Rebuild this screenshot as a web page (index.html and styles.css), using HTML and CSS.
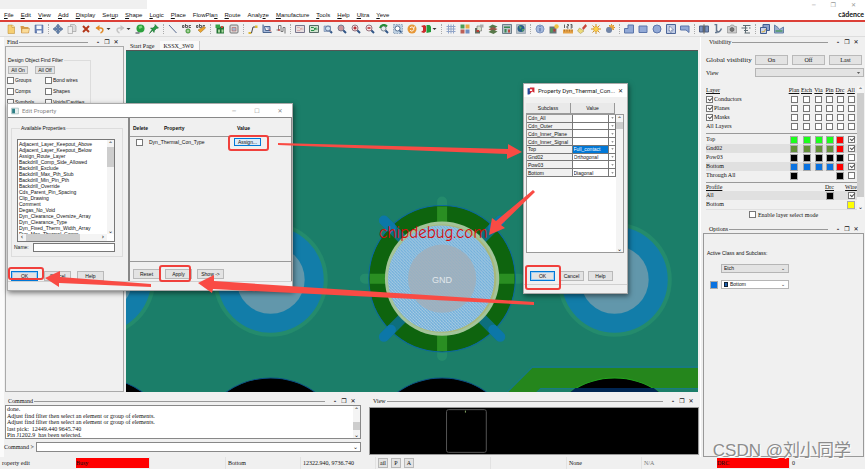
FILE: index.html
```html
<!DOCTYPE html>
<html lang="en">
<head>
<meta charset="utf-8">
<title>Edit Property</title>
<link rel="stylesheet" href="styles.css">
</head>
<body>
<svg class="defs" aria-hidden="true">
  <defs>
    <symbol id="new" viewBox="0 0 20 20"><path d="M4 2h9l4 4v13H4z" fill="#f6cf73" stroke="#b98427"/><path d="M12 2v5h5" fill="#fff3c8" stroke="#b98427"/></symbol>
    <symbol id="open" viewBox="0 0 20 20"><path d="M1 4h6l2 2h8v12H3z" fill="#d79b48"/><path d="M4 9h15l-2 9H3z" fill="#fbdc99" stroke="#bb7e2e"/></symbol>
    <symbol id="save" viewBox="0 0 20 20"><path d="M2 2h16v16H2z" fill="#7088bb" stroke="#465d91"/><path d="M5 3h10v7H5zM6 13h9v5H6z" fill="#f4f7fb"/></symbol>
    <symbol id="move" viewBox="0 0 20 20"><path d="M10 0l4 5h-2v3h3V6l5 4-5 4v-2h-3v3h2l-4 5-4-5h2v-3H5v2l-5-4 5-4v2h3V5H6z" fill="#6784ad" stroke="#405f87"/></symbol>
    <symbol id="copy" viewBox="0 0 20 20"><path d="M7 1h8l3 3v11H7z" fill="#ddd" stroke="#888"/><path d="M2 5h9v14H2z" fill="#eee" stroke="#888"/></symbol>
    <symbol id="del" viewBox="0 0 20 20"><path d="M4 4l12 12M16 4L4 16" stroke="#b43719" stroke-width="4"/></symbol>
    <symbol id="undo" viewBox="0 0 20 20"><path d="M3 8h8c7 0 6 8 0 10" fill="none" stroke="#df8b2c" stroke-width="3"/><path d="M1 8l8-6v12z" fill="#e48b26"/></symbol>
    <symbol id="redo" viewBox="0 0 20 20"><path d="M17 8H9c-7 0-6 8 0 10" fill="none" stroke="#c4c4c4" stroke-width="3"/><path d="M19 8l-8-6v12z" fill="#c4c4c4"/></symbol>
    <symbol id="drop" viewBox="0 0 10 20"><path d="M1 8h8l-4 4z" fill="#333"/></symbol>
    <symbol id="ball" viewBox="0 0 20 20"><circle cx="11" cy="9" r="8" fill="#2ba13d"/><path d="M1 17h8v2H1z" fill="#334"/><path d="M7 5l6-2 2 4-6 3z" fill="#7ad77d"/></symbol>
    <symbol id="pin" viewBox="0 0 20 20"><path d="M12 1l7 7-4 1-4 4-1 4-3-4-6 6 5-8-3-3 5 0 4-4z" fill="#2a9a45" stroke="#15652a"/></symbol>
    <symbol id="line" viewBox="0 0 20 20"><path d="M2 2l15 16" stroke="#586b91" stroke-width="2"/></symbol>
    <symbol id="abc" viewBox="0 0 20 20"><path d="M1 7V3h3v4H1m6-7v7h4V3H7m11 0h-4v4h4" fill="none" stroke="#333" stroke-width="1.5"/><circle cx="12" cy="14" r="4.5" fill="#55ae45" stroke="#30762d"/><path d="M12 11v6m-3-3h6" stroke="#fff"/></symbol>
    <symbol id="abcp" viewBox="0 0 20 20"><path d="M1 7V3h3v4H1m6-7v7h4V3H7m11 0h-4v4h4" fill="none" stroke="#333" stroke-width="1.5"/><path d="M4 12l5 5 10-9-2-3z" fill="#eca52f" stroke="#98671c"/></symbol>
    <symbol id="chipg" viewBox="0 0 20 20"><path d="M3 5h15v14H3z" fill="#247334"/><path d="M1 1h9v7H1z" fill="#36a347"/><path d="M6 11h4v6H6zm7 0h4v6h-4z" fill="#a5d59c"/><path d="M12 4h4v4h-4z" fill="#c44d3b"/></symbol>
    <symbol id="chip" viewBox="0 0 20 20"><rect x="2" y="2" width="16" height="16" rx="2" fill="#ddd" stroke="#777" stroke-width="2"/><path d="M6 7h8v7H6z" fill="#a5b6cf" stroke="#b65242"/></symbol>
    <symbol id="route" viewBox="0 0 20 20"><path d="M3 18h4l3-12h6" fill="none" stroke="#444" stroke-width="2"/><path d="M14 3h5v5h-5zM1 16h5v4H1z" fill="#dfba36"/></symbol>
    <symbol id="slide" viewBox="0 0 20 20"><path d="M2 1v16h17M5 5h11v8H7z" fill="#a7badb" stroke="#49658f" stroke-width="2"/><path d="M14 11l4 4" stroke="#b64340" stroke-width="2"/></symbol>
    <symbol id="wave" viewBox="0 0 20 20"><path d="M1 12h4V3h5v12h4V7h4v12" fill="none" stroke="#777" stroke-width="2"/><circle cx="6" cy="12" r="2" fill="#b64340"/></symbol>
    <symbol id="board" viewBox="0 0 20 20"><path d="M1 3h18v14H1z" fill="#e7dede" stroke="#77758d" stroke-width="2"/><path d="M4 7h5l3 3h5M4 13h6l4-6" fill="none" stroke="#c88"/></symbol>
    <symbol id="boardg" viewBox="0 0 20 20"><path d="M1 3h18v14H1z" fill="#cfe3cd" stroke="#576b67" stroke-width="2"/><path d="M4 7h5l3 3h5M4 13h6l4-6" fill="none" stroke="#268b45" stroke-width="2"/></symbol>
    <symbol id="zoom" viewBox="0 0 20 20"><path d="M12 12l6 6" stroke="#315687" stroke-width="4"/><circle cx="8" cy="8" r="6" fill="#c9959b" stroke="#77798c" stroke-width="2"/></symbol>
    <symbol id="zoomb" viewBox="0 0 20 20"><path d="M12 12l6 6" stroke="#315687" stroke-width="4"/><path d="M2 4h13v11H2z" fill="#aac2df" stroke="#65799c"/><circle cx="10" cy="9" r="5" fill="#cfe2f1" stroke="#65799c" stroke-width="2"/></symbol>
    <symbol id="zoomp" viewBox="0 0 20 20"><path d="M12 12l6 6" stroke="#315687" stroke-width="4"/><circle cx="8" cy="8" r="6" fill="#f6e5e6" stroke="#97717d" stroke-width="2"/><path d="M5 8h6M8 5v6" stroke="#b4282e" stroke-width="3"/></symbol>
    <symbol id="zoomm" viewBox="0 0 20 20"><path d="M12 12l6 6" stroke="#315687" stroke-width="4"/><circle cx="8" cy="8" r="6" fill="#f6e5e6" stroke="#97717d" stroke-width="2"/><path d="M5 8h6" stroke="#b4282e" stroke-width="3"/></symbol>
    <symbol id="zoomg" viewBox="0 0 20 20"><path d="M12 12l6 6" stroke="#315687" stroke-width="4"/><circle cx="9" cy="9" r="5" fill="#e7ebed" stroke="#7a8795" stroke-width="2"/><path d="M2 8c2-7 9-8 14-3" fill="none" stroke="#278c37" stroke-width="4"/></symbol>
    <symbol id="fit" viewBox="0 0 20 20"><path d="M1 1h18v18H1z" fill="#bdd0e2" stroke="#587191" stroke-dasharray="3 2"/><circle cx="9" cy="9" r="5" fill="#fff" stroke="#587191" stroke-width="2"/><path d="M13 13l4 4" stroke="#315687" stroke-width="3"/></symbol>
    <symbol id="refresh" viewBox="0 0 20 20"><circle cx="10" cy="10" r="9" fill="#e79839"/><path d="M6 8c3-5 10 0 7 4-2 3-5 3-7 0m7-3l2-4" fill="none" stroke="#fff" stroke-width="2"/></symbol>
    <symbol id="threed" viewBox="0 0 20 20"><path d="M0 4l7-2 3 2v11l-4 3-6-2 4-3V7z" fill="#ce292b"/><path d="M11 2h6l3 3v11l-9 2z" fill="#24993a"/></symbol>
    <symbol id="grid" viewBox="0 0 20 20"><path d="M5 1v18M10 1v18M15 1v18M1 5h18M1 10h18M1 15h18" stroke="#91a5c8" stroke-width="2"/></symbol>
    <symbol id="tiles" viewBox="0 0 20 20"><path d="M1 1h8v8H1z" fill="#4c9d55"/><path d="M11 1h8v8h-8z" fill="#e8ab45"/><path d="M1 11h8v8H1z" fill="#bc6057"/><path d="M11 11h8v8h-8z" fill="#6f8dc0"/></symbol>
    <symbol id="hier" viewBox="0 0 20 20"><path d="M2 8h10v11H2z" fill="#637062"/><path d="M6 4h9v10H6z" fill="#d6e0cd" stroke="#555"/><path d="M12 1h7v6h-7z" fill="#aaa"/><path d="M5 12h5v4H5z" fill="#bd3e34"/></symbol>
    <symbol id="layers" viewBox="0 0 20 20"><path d="M1 6l8-5 10 4-8 5z" fill="#56794b"/><path d="M1 11l8-5 10 4-8 5z" fill="#985548"/><path d="M1 16l8-5 10 4-8 5z" fill="#58794a"/></symbol>
    <symbol id="cross" viewBox="0 0 20 20"><path d="M1 1h18v18H1z" fill="#b5c1c7" stroke="#6f7f8b" stroke-width="2"/><path d="M4 5h12v3H4zm1 5h4v7H5z" fill="#3b8752"/><path d="M12 11h4v6h-4z" fill="#ba4d41"/></symbol>
    <symbol id="globe" viewBox="0 0 20 20"><path d="M1 1h18v18H1z" fill="#b6bfc6" stroke="#7b8997"/><circle cx="10" cy="9" r="7" fill="#2a5f8a"/><path d="M6 4l6 2-4 5m4-1h5l-4 6z" fill="#56a85d"/></symbol>
    <symbol id="info" viewBox="0 0 20 20"><circle cx="10" cy="10" r="8" fill="#a3b8dc" stroke="#7d93bd" stroke-width="2"/><path d="M10 8v7M10 4v2" stroke="#4c669a" stroke-width="2"/></symbol>
    <symbol id="drc" viewBox="0 0 20 20"><path d="M1 5h14v14H1z" fill="#67727a"/><path d="M3 8h4v9H3z" fill="#4e9d58"/><path d="M9 10h4v5H9z" fill="#b8392f"/><circle cx="15" cy="5" r="4.5" fill="#efc244"/></symbol>
    <symbol id="ruler" viewBox="0 0 20 20"><path d="M3 1v7m5-7h3v3H8v4h3m4-7h3v7h-3m0-4h3" fill="none" stroke="#333" stroke-width="1.5"/><path d="M0 11h20v8H0z" fill="#e5a044"/><path d="M3 11v4m5-4v4m5-4v4m5-4v4" stroke="#7b4d17"/></symbol>
    <symbol id="brush" viewBox="0 0 20 20"><path d="M10 8l7-8 3 4-7 8z" fill="#ca473c"/><path d="M5 8l9 6-7 5-6-5z" fill="#eedb79" stroke="#9e8b46"/></symbol>
    <symbol id="sun" viewBox="0 0 20 20"><path d="M10 0v20M0 10h20M3 3l14 14M17 3L3 17" stroke="#cf8f27" stroke-width="2"/><circle cx="10" cy="10" r="5" fill="#fbd24a" stroke="#d69224"/></symbol>
    <symbol id="sung" viewBox="0 0 20 20"><path d="M13 0v14M5 7h15M8 2l10 10M18 2L8 12" stroke="#d28d2f" stroke-width="2"/><circle cx="13" cy="7" r="5" fill="#e9a840"/><circle cx="8" cy="12" r="6" fill="#7185a7"/></symbol>
    <symbol id="poly" viewBox="0 0 20 20"><path d="M8 2h11v16H1V9h7z" fill="#92a9d6" stroke="#5b75aa" stroke-width="2"/></symbol>
    <symbol id="rect" viewBox="0 0 20 20"><path d="M2 4h16v13H2z" fill="#92a9d6" stroke="#5b75aa" stroke-width="2"/></symbol>
    <symbol id="circ" viewBox="0 0 20 20"><circle cx="10" cy="10" r="8" fill="#92a9d6" stroke="#5b75aa" stroke-width="2"/></symbol>
    <symbol id="sel" viewBox="0 0 20 20"><path d="M1 1h18v18H1z" fill="#c0cce5" stroke="#4d6698" stroke-width="2"/><path d="M7 4l8 8h-4l1 4-3 1-1-4-2 1z" fill="#fff" stroke="#445b89"/></symbol>
    <symbol id="edit" viewBox="0 0 20 20"><path d="M1 4h17v13l-6-5H1z" fill="#92a9d6" stroke="#5b75aa" stroke-width="2"/></symbol>
    <symbol id="flip" viewBox="0 0 20 20"><path d="M1 4h7v12H1zM12 4h7v12h-7z" fill="#7790bb" stroke="#4d5f83" stroke-width="2"/><path d="M10 1v18" stroke="#222" stroke-width="2"/></symbol>
    <symbol id="bend" viewBox="0 0 20 20"><path d="M3 1h4v12c3 5 7 3 10-4M4 17h5" fill="none" stroke="#65778e" stroke-width="3"/></symbol>
    <symbol id="cam" viewBox="0 0 20 20"><path d="M1 5h5l2-3h5l2 3h4v13H1z" fill="#ccc" stroke="#777"/><circle cx="10" cy="11" r="4" fill="#777" stroke="#444"/></symbol>
    <symbol id="table" viewBox="0 0 20 20"><path d="M4 3h15M1 8h12m3 0h3M6 13h8M7 18h11M9 4v14" stroke="#5d6b72" stroke-width="2"/></symbol>
    <symbol id="stack" viewBox="0 0 20 20"><path d="M6 1h13v12H6z" fill="#8ba2cc" stroke="#405c91" stroke-width="2"/><path d="M1 7h12v12H1z" fill="#c9d4e9" stroke="#405c91" stroke-width="2"/><path d="M3 16l6-1 2-5" stroke="#d1a632" fill="none" stroke-width="2"/></symbol>
    <symbol id="map" viewBox="0 0 20 20"><path d="M1 2l7 5 3 4 8-5v12H1z" fill="#9aaed0" stroke="#6580a8" stroke-width="2"/><path d="M3 14h14" stroke="#4e9865" stroke-width="3"/></symbol>
    <pattern id="hatch" width="3" height="3" patternUnits="userSpaceOnUse"><path d="M0 0h3v3H0z" fill="#72b0dc"/><path d="M0 0h1v1H0zM1 1h1v1H1zM2 2h1v1H2z" fill="#b9d3e2"/></pattern>
    <pattern id="hatch2" width="3" height="3" patternUnits="userSpaceOnUse"><path d="M0 0h3v3H0z" fill="#97b0c2"/><path d="M0 0h1v1H0zM1 1h1v1H1zM2 2h1v1H2z" fill="#a9b3bc"/></pattern>
  </defs>
</svg>

<div class="app">
  <header class="top">
    <div class="caption"><span class="ghost"></span><span class="syscontrols"><i>─</i><i>❐</i><i>✕</i></span></div>
    <nav class="menu">
      <a href="#"><u>F</u>ile</a><a href="#"><u>E</u>dit</a><a href="#"><u>V</u>iew</a><a href="#"><u>A</u>dd</a><a href="#"><u>D</u>isplay</a><a href="#">Set<u>u</u>p</a><a href="#"><u>S</u>hape</a><a href="#"><u>L</u>ogic</a><a href="#"><u>P</u>lace</a><a href="#">FlowPla<u>n</u></a><a href="#"><u>R</u>oute</a><a href="#">Analy<u>z</u>e</a><a href="#"><u>M</u>anufacture</a><a href="#"><u>T</u>ools</a><a href="#"><u>H</u>elp</a><a href="#"><u>U</u>ltra</a><a href="#"><u>Y</u>eve</a>
      <strong class="brand">cādence</strong>
    </nav>
  </header>
  <div class="toolbar">
    <div class="tg"><svg><use href="#new"/></svg><svg><use href="#open"/></svg><svg><use href="#save"/></svg></div>
    <div class="tg"><svg><use href="#move"/></svg><svg><use href="#copy"/></svg><svg><use href="#del"/></svg><svg><use href="#undo"/></svg><svg class="dd"><use href="#drop"/></svg><svg><use href="#redo"/></svg><svg class="dd"><use href="#drop"/></svg><svg><use href="#ball"/></svg><svg><use href="#pin"/></svg></div>
    <div class="tg"><svg><use href="#line"/></svg><svg><use href="#abc"/></svg><svg><use href="#abcp"/></svg></div>
    <div class="tg"><svg><use href="#chipg"/></svg><svg><use href="#chip"/></svg></div>
    <div class="tg"><svg><use href="#route"/></svg><svg><use href="#slide"/></svg><svg><use href="#wave"/></svg></div>
    <div class="tg"><svg><use href="#board"/></svg><svg><use href="#boardg"/></svg><svg><use href="#zoomb"/></svg><svg><use href="#zoom"/></svg><svg><use href="#zoomp"/></svg><svg><use href="#zoomm"/></svg><svg><use href="#zoomg"/></svg><svg><use href="#fit"/></svg><svg><use href="#refresh"/></svg><svg><use href="#threed"/></svg><svg class="dd"><use href="#drop"/></svg></div>
    <div class="tg"><svg><use href="#grid"/></svg><svg><use href="#tiles"/></svg><svg><use href="#hier"/></svg><svg><use href="#layers"/></svg><svg><use href="#cross"/></svg><svg><use href="#globe"/></svg></div>
    <div class="tg"><svg><use href="#info"/></svg><svg><use href="#drc"/></svg><svg><use href="#ruler"/></svg><svg><use href="#brush"/></svg><svg><use href="#sun"/></svg><svg><use href="#sung"/></svg></div>
    <div class="tg"><svg><use href="#poly"/></svg><svg><use href="#rect"/></svg><svg><use href="#circ"/></svg><svg><use href="#sel"/></svg><svg><use href="#edit"/></svg></div>
    <div class="tg"><svg><use href="#flip"/></svg><svg><use href="#bend"/></svg><svg><use href="#cam"/></svg><svg><use href="#table"/></svg></div>
    <div class="tg"><svg><use href="#stack"/></svg><svg><use href="#map"/></svg></div>
  </div>

  <main class="work">
    <div class="left">
      <div class="upper">
        <section class="find">
          <div class="phead"><span>Find</span><hr><b>-</b><b>❐</b><b>✕</b></div>
          <div class="findbox">
            <fieldset class="filter">
              <legend>Design Object Find Filter</legend>
              <div class="row"><button>All On</button><button>All Off</button></div>
              <div class="checks">
                <label><input type="checkbox">Groups</label><label><input type="checkbox">Bond wires</label>
                <label><input type="checkbox">Comps</label><label><input type="checkbox">Shapes</label>
                <label><input type="checkbox">Symbols</label><label><input type="checkbox">Voids/Cavities</label>
              </div>
            </fieldset>
          </div>
        </section>
        <section class="design">
          <div class="tabs"><a href="#">Start Page</a><a href="#" class="on">KSSX_3W0</a></div>
          <svg class="canvas" viewBox="126 51 572 340" preserveAspectRatio="xMidYMid slice">
            <path d="M126 51h572v340H126z" fill="#1b7e69"/>
            <path d="M506 391l26-26h166v26z" fill="#187a80"/>
            <path d="M508 391l24-24h166v20H540l-4 4z" fill="#25861c"/>
            <path d="M536 391l5-3h157v3z" fill="#1b7e69"/>
            <g fill="#000" stroke="#0b4f86"><circle cx="99" cy="453" r="76"/><circle cx="271" cy="453" r="76"/><circle cx="442" cy="453" r="76"/><circle cx="614" cy="453" r="76" stroke="#23a520"/></g>
            <path d="M575 387h78l5 4h-88z" fill="#002652"/>
            <g fill="#248b6c"><circle cx="99" cy="279" r="57"/><circle cx="271" cy="279" r="57"/><circle cx="614" cy="279" r="57"/></g>
            <g fill="#127da9"><circle cx="99" cy="279" r="53"/><circle cx="271" cy="279" r="53"/><circle cx="614" cy="279" r="53"/></g>
            <g fill="#6297ab"><circle cx="99" cy="279" r="34"/><circle cx="271" cy="279" r="34"/><circle cx="614" cy="279" r="34"/></g>
            <path d="M442 201v154M365 278h154" stroke="#248b6c" stroke-width="10" stroke-linecap="round"/>
            <circle cx="442" cy="278" r="73" fill="#0e640e" stroke="#0b68a0"/>
            <path d="M442 206v144M370 278h144" stroke="#2a8e22" stroke-width="10"/>
            <path d="M384 220l116 116M500 220L384 336" stroke="#0d6f7d" stroke-width="10"/>
            <path d="M384 220l7 7M500 220l-7 7M384 336l7-7M500 336l-7-7" stroke="#0c77a8" stroke-width="10" stroke-linecap="round"/>
            <circle cx="442" cy="278" r="57" fill="#a3c49a"/>
            <circle cx="442" cy="278" r="54" fill="#a9b87a"/>
            <circle cx="441" cy="278" r="53" fill="url(#hatch)"/>
            <circle cx="442" cy="278" r="34" fill="url(#hatch2)"/>
            <text x="442" y="282" class="net">GND</text>
          </svg>
        </section>
      </div>
      <div class="lower">
        <section class="command">
          <div class="phead"><span>Command</span><hr><b>-</b><b>❐</b><b>✕</b></div>
          <div class="log"><div class="lines"><p>done.</p><p>Adjust find filter then select an element or group of elements.</p><p>Adjust find filter then select an element or group of elements.</p><p>last pick:&nbsp; 12449.440 9645.740</p><p>Pin J1202.9&nbsp; has been selected.</p></div><div class="vbar low"><i>⌃</i><span></span><i>⌄</i></div></div>
          <div class="prompt"><label for="cmd">Command &gt;</label><input id="cmd" type="text"><i>⌄</i></div>
        </section>
        <section class="view">
          <div class="phead"><span>View</span><hr><b>-</b><b>❐</b><b>✕</b></div>
          <svg class="mini" viewBox="369 407 330 47" preserveAspectRatio="xMidYMid slice"><rect x="446" y="409" width="40" height="43" rx="2" fill="none" stroke="#555"/><path d="M465 410v2" stroke="#8a6"/></svg>
        </section>
      </div>
    </div>
    <aside class="side">
      <section class="visibility">
        <div class="phead"><span>Visibility</span><hr><b>-</b><b>❐</b><b>✕</b></div>
        <div class="global"><span>Global visibility</span><button>On</button><button>Off</button><button>Last</button></div>
        <div class="viewsel"><label for="vw">View</label><span class="combo"><select id="vw"><option></option></select><svg class="caret"><use href="#drop"/></svg></span></div>
        <div class="layers">
          <div class="tablewrap">
          <table>
            <colgroup><col><col class="c12"><col class="c13"><col class="c11"><col class="c11"><col class="c10"><col class="c12"></colgroup>
            <thead><tr><th>Layer</th><th>Plan</th><th>Etch</th><th>Via</th><th>Pin</th><th>Drc</th><th>All</th></tr></thead>
            <tbody>
              <tr><td><label><input type="checkbox" checked>Conductors</label></td><td><input type="checkbox" aria-label="Plan"></td><td><input type="checkbox" aria-label="Etch"></td><td><input type="checkbox" aria-label="Via"></td><td><input type="checkbox" aria-label="Pin"></td><td><input type="checkbox" aria-label="Drc"></td><td><input type="checkbox" aria-label="All"></td></tr>
              <tr><td><label><input type="checkbox" checked>Planes</label></td><td><input type="checkbox" aria-label="Plan"></td><td><input type="checkbox" aria-label="Etch"></td><td><input type="checkbox" aria-label="Via"></td><td><input type="checkbox" aria-label="Pin"></td><td><input type="checkbox" aria-label="Drc"></td><td><input type="checkbox" aria-label="All"></td></tr>
              <tr><td><label><input type="checkbox" checked>Masks</label></td><td><input type="checkbox" aria-label="Plan"></td><td><input type="checkbox" aria-label="Etch"></td><td><input type="checkbox" aria-label="Via"></td><td><input type="checkbox" aria-label="Pin"></td><td><input type="checkbox" aria-label="Drc"></td><td><input type="checkbox" aria-label="All"></td></tr>
              <tr><td>All Layers</td><td><input type="checkbox" aria-label="Plan"></td><td><input type="checkbox" aria-label="Etch"></td><td><input type="checkbox" aria-label="Via"></td><td><input type="checkbox" aria-label="Pin"></td><td><input type="checkbox" aria-label="Drc"></td><td><input type="checkbox" aria-label="All"></td></tr>
              <tr class="rule"><td colspan="7"></td></tr>
              <tr><td>Top</td><td><i class="sw lime"></i></td><td><i class="sw lime"></i></td><td><i class="sw lime"></i></td><td><i class="sw lime"></i></td><td><i class="sw red"></i></td><td><input type="checkbox" checked aria-label="All"></td></tr>
              <tr class="alt"><td>Gnd02</td><td><i class="sw olive"></i></td><td><i class="sw olive"></i></td><td><i class="sw olive"></i></td><td><i class="sw olive"></i></td><td><i class="sw red"></i></td><td><input type="checkbox" checked aria-label="All"></td></tr>
              <tr><td>Pow03</td><td><i class="sw"></i></td><td><i class="sw"></i></td><td><i class="sw"></i></td><td><i class="sw"></i></td><td><i class="sw"></i></td><td><input type="checkbox" aria-label="All"></td></tr>
              <tr class="alt"><td>Bottom</td><td><i class="sw blue"></i></td><td><i class="sw blue"></i></td><td><i class="sw blue"></i></td><td><i class="sw blue"></i></td><td><i class="sw red"></i></td><td><input type="checkbox" checked aria-label="All"></td></tr>
              <tr><td>Through All</td><td><i class="sw"></i></td><td></td><td></td><td></td><td><i class="sw"></i></td><td><input type="checkbox" aria-label="All"></td></tr>
              <tr class="rule"><td colspan="7"></td></tr>
              <tr class="sub"><th>Profile</th><th></th><th></th><th></th><th>Drc</th><th></th><th>Wire</th></tr>
              <tr class="alt"><td>All</td><td></td><td></td><td></td><td><i class="sw"></i></td><td></td><td><input type="checkbox" checked aria-label="Wire"></td></tr>
              <tr><td>Bottom</td><td></td><td></td><td></td><td></td><td></td><td><i class="sw yellow"></i></td></tr>
              <tr class="alt"><td>&nbsp;</td><td></td><td></td><td></td><td></td><td></td><td><i class="sw yellow"></i></td></tr>
            </tbody>
          </table>
          </div>
          <div class="vbar tall"><i>⌃</i><span></span><i>⌄</i></div>
        </div>
        <label class="enable"><input type="checkbox">Enable layer select mode</label>
      </section>
      <section class="options">
        <div class="phead"><span>Options</span><hr><b>-</b><b>❐</b><b>✕</b></div>
        <div class="optbox">
          <label for="cls">Active Class and Subclass:</label>
          <div class="optrow"><span class="combo grey"><select id="cls"><option>Etch</option></select><i>⌄</i></span></div>
          <div class="optrow"><i class="sw blue"></i><span class="combo"><i class="chiplet"></i><select aria-label="Subclass"><option>Bottom</option></select><i>⌄</i></span></div>
        </div>
      </section>
    </aside>
  </main>

  <footer class="status">
    <span>roperty edit</span><span class="busy">Busy</span><span></span><span>Bottom</span><span>12322.940, 9736.740</span><span class="keys"><button>ail</button><button>P</button><button>A</button></span><span></span><span>None</span><span class="dim">N/A</span><span class="busy">DRC</span><span>0</span>
  </footer>

  <div class="dialog edit" role="dialog" aria-label="Edit Property">
    <div class="dtitle"><svg class="appicon" viewBox="0 0 14 14"><path d="M1 2h12v10H1z" fill="#e8f0f0" stroke="#8aa"/><path d="M2 3h5v8H2z" fill="#2e7f86"/></svg><span>Edit Property</span><i>─</i><i>☐</i><i>✕</i></div>
    <div class="panes">
      <div class="pane avail">
        <fieldset class="group">
          <legend>Available Properties</legend>
          <div class="listframe">
            <div class="listtop">
              <select multiple size="16" aria-label="Available Properties">
                <option>Adjacent_Layer_Keepout_Above</option><option>Adjacent_Layer_Keepout_Below</option><option>Assign_Route_Layer</option><option>Backdrill_Comp_Side_Allowed</option><option>Backdrill_Exclude</option><option>Backdrill_Max_Pth_Stub</option><option>Backdrill_Min_Pin_Pth</option><option>Backdrill_Override</option><option>Cds_Parent_Pin_Spacing</option><option>Clip_Drawing</option><option>Comment</option><option>Degas_No_Void</option><option>Dyn_Clearance_Oversize_Array</option><option>Dyn_Clearance_Type</option><option>Dyn_Fixed_Therm_Width_Array</option><option>Dyn_Max_Thermal_Conns</option>
              </select>
              <div class="vbar"><i>⌃</i><span></span><i>⌄</i></div>
            </div>
            <div class="hbar"><i>‹</i><span></span><i>›</i></div>
          </div>
          <div class="name"><label for="nm">Name:</label><input id="nm" type="text"></div>
        </fieldset>
        <div class="buttons"><button class="primary">OK</button><button>Cancel</button><button>Help</button></div>
      </div>
      <div class="pane values">
        <table class="props">
          <thead><tr><th>Delete</th><th>Property</th><th>Value</th></tr></thead>
          <tbody><tr><td><input type="checkbox" aria-label="Delete"></td><td>Dyn_Thermal_Con_Type</td><td><button class="assign">Assign...</button></td></tr></tbody>
        </table>
        <div class="buttons"><button>Reset</button><button>Apply</button><button>Show -&gt;</button></div>
      </div>
    </div>
    <div class="dfoot"></div>
  </div>

  <div class="dialog prop" role="dialog" aria-label="Property Dyn_Thermal_Con_Type">
    <div class="dtitle dark"><svg class="appicon" viewBox="0 0 14 14"><path d="M1 2h6v8l-3 3H1z" fill="#254a9c"/><path d="M5 1h8v9l-4-2-4 4z" fill="#d42a36"/><path d="M5 4h4v3H5z" fill="#fff"/></svg><span>Property Dyn_Thermal_Con...</span><i>✕</i></div>
    <div class="pbody">
      <div class="phdr"><span>Subclass</span><span>Value</span></div>
      <div class="pframe">
        <div class="pscroll">
        <table>
          <tr><th>Cdn_All</th><td><select aria-label="Cdn_All"><option></option></select></td><td class="ar"><svg><use href="#drop"/></svg></td></tr>
          <tr><th>Cdn_Outer</th><td><select aria-label="Cdn_Outer"><option></option></select></td><td class="ar"><svg><use href="#drop"/></svg></td></tr>
          <tr><th>Cdn_Inner_Plane</th><td><select aria-label="Cdn_Inner_Plane"><option></option></select></td><td class="ar"><svg><use href="#drop"/></svg></td></tr>
          <tr><th>Cdn_Inner_Signal</th><td><select aria-label="Cdn_Inner_Signal"><option></option></select></td><td class="ar"><svg><use href="#drop"/></svg></td></tr>
          <tr><th>Top</th><td class="picked"><select aria-label="Top"><option>Full_contact</option></select></td><td class="ar"><svg><use href="#drop"/></svg></td></tr>
          <tr><th>Gnd02</th><td><select aria-label="Gnd02"><option>Orthogonal</option></select></td><td class="ar"><svg><use href="#drop"/></svg></td></tr>
          <tr><th>Pow03</th><td><select aria-label="Pow03"><option></option></select></td><td class="ar"><svg><use href="#drop"/></svg></td></tr>
          <tr><th>Bottom</th><td><select aria-label="Bottom"><option>Diagonal</option></select></td><td class="ar"><svg><use href="#drop"/></svg></td></tr>
        </table>
        </div>
        <div class="vbar short"><i>⌃</i><span></span><i>⌄</i></div>
      </div>
      <div class="buttons"><button class="primary">OK</button><button>Cancel</button><button>Help</button></div>
    </div>
    <div class="dfoot"></div>
  </div>

  <svg class="notes" viewBox="0 0 865 469" preserveAspectRatio="none" aria-hidden="true">
    <g fill="none" stroke="#f0403c" stroke-width="2"><rect x="229" y="136" width="39" height="14" rx="2"/><rect x="9" y="268" width="34" height="11" rx="2"/><rect x="160" y="266" width="30" height="15" rx="2"/><rect x="526" y="266" width="34" height="23" rx="2"/></g>
    <g fill="#f94b44">
      <path d="M278 143l230 6v-5l14 8-15 7v-5l-229-9z"/>
      <path d="M533 190l2 2-34 33 4 3-16 7 3-17 4 3z"/>
      <path d="M534 302v3l-321-16-1 4-14-10 16-8v6z"/>
      <path d="M151 284v3l-92-4v4l-14-9 15-7v6z"/>
    </g>
  </svg>
  <div class="stamp">chipdebug.com</div>
  <div class="watermark">CSDN @刘小同学</div>
</div>
</body>
</html>
```
FILE: styles.css
```css
* { box-sizing: border-box; }
body { margin: 0; background: #f0f0f0; color: #111; font: 6px/8px "Liberation Serif", serif; }
button, input, select { font: inherit; color: inherit; margin: 0; padding: 0; min-width: 0; border-radius: 0; }
button { background: #e3e3e3; border: 1px solid #b9b9b9; text-align: center; white-space: nowrap; }
a { color: inherit; text-decoration: none; }
i { font-style: normal; }
p { margin: 0; }
fieldset { margin: 0; min-width: 0; border: 1px solid #dcdcdc; padding: 0; }
legend { padding: 0 1px; }
table { border-collapse: collapse; border-spacing: 0; }
td, th { padding: 0; font-weight: normal; text-align: left; }
select { appearance: none; border: 0; background: transparent; width: 100%; outline: 0; }
.defs { position: absolute; width: 0; height: 0; }
.app { position: relative; display: flex; flex-direction: column; height: 100vh; min-height: 400px; overflow: hidden; }

input[type="checkbox"] { appearance: none; position: relative; display: block; flex: none; width: 7px; height: 7px; background: #fff; border: 1px solid #777; }
input[type="checkbox"]:checked::after { content: ""; position: absolute; left: 1px; top: 0; width: 4px; height: 2px; border: solid #555; border-width: 0 0 1px 1px; transform: rotate(-45deg); }

.top { background: #fff; border-bottom: 2px solid #dc3f37; }
.caption { display: flex; justify-content: space-between; height: 10px; }
.ghost { width: 17%; height: 9px; background: #f0f0f0; }
.syscontrols { display: flex; gap: 15px; padding-right: 9px; color: #999; font: 6px/10px "DejaVu Sans", sans-serif; }
.menu { display: flex; gap: 7px; height: 10px; padding: 0 1px 0 4px; font: 6px/10px "Liberation Sans", sans-serif; }
.menu u { text-decoration-thickness: 1px; }
.brand { margin-left: auto; font: bold 7px/8px Lato, sans-serif; }

.toolbar { display: flex; height: 15px; padding: 2px 0 2px 1px; background: #f1f1f1; border-bottom: 1px solid #ddd; }
.tg { display: flex; align-items: center; gap: 4px; padding: 0 4px 0 4px; border-left: 1px dotted #aaa; }
.tg:first-child { border-color: transparent; }
.tg svg { width: 10px; height: 10px; flex: none; }
.tg .dd { width: 5px; margin-left: -3px; }

.work { display: flex; flex: 1; min-height: 0; }
.left { display: flex; flex-direction: column; flex: 1; min-width: 0; border-left: 4px solid #fbfbfb; }
.upper { display: flex; flex: 1; min-height: 0; }
.find { display: flex; flex-direction: column; width: 122px; padding: 1px 2px 0 1px; }
.phead { display: flex; align-items: center; height: 8px; gap: 1px; padding: 0 4px 0 2px; }
.phead hr { flex: 1; height: 1px; margin: 0 5px 0 0; border: 0; background: #999; }
.phead b { width: 8px; text-align: center; font: bold 6px/8px "DejaVu Sans", sans-serif; }
.findbox { flex: 1; border: 1px solid #aaa; padding: 10px 0 0 1px; font: 5px/7px "Liberation Sans", sans-serif; }
.filter { width: 84px; height: 60px; border-left: 0; }
.row { display: flex; gap: 7px; padding: 2px 1px 3px; }
.row button { width: 20px; height: 8px; line-height: 6px; }
.checks { display: grid; grid-template-columns: 38px 1fr; row-gap: 4px; }
.checks label { display: flex; align-items: center; gap: 1px; white-space: nowrap; }

.design { display: flex; flex-direction: column; flex: 1; min-width: 0; padding-right: 2px; }
.tabs { display: flex; align-items: flex-end; height: 14px; border-bottom: 1px solid #555; }
.tabs a { padding: 1px 5px 0 4px; height: 9px; }
.tabs .on { background: #fafafa; border-right: 1px solid #ccc; }
.canvas { display: block; flex: 1; min-height: 0; width: 100%; background: #1b7e69; }
.net { font: 9px "Liberation Sans", sans-serif; fill: #e0e7eb; text-anchor: middle; }

.lower { display: flex; height: 65px; padding-top: 5px; }
.command { display: flex; flex-direction: column; flex: 357; min-width: 0; }
.view { display: flex; flex-direction: column; flex: 330; min-width: 0; margin-left: 8px; padding-right: 1px; }
.view .phead, .command .phead { padding-left: 4px; }
.mini { flex: 1; min-height: 0; width: 100%; margin: 2px 0; background: #000; border: 1px solid #999; }
.log { display: flex; height: 34px; margin: 0 0 2px 1px; border: 1px solid #888; background: #fff; }
.lines { display: flex; flex-direction: column; flex: 1; justify-content: space-between; padding-left: 1px; line-height: 6px; overflow: hidden; }
.prompt { display: flex; align-items: center; height: 11px; }
.prompt input { flex: 1; height: 10px; margin-left: 2px; border: 1px solid #888; border-right: 0; background: #fff; }
.prompt i { width: 8px; height: 10px; border: 1px solid #888; border-left: 0; background: #fff; font-family: "DejaVu Sans", sans-serif; }

.vbar { display: flex; flex-direction: column; flex: none; width: 7px; background: #f4f4f4; text-align: center; font: 6px/7px "DejaVu Sans", sans-serif; }
.vbar span { flex: none; height: 20px; background: #cdcdcd; }
.vbar i:last-child { margin-top: auto; }
.vbar.low span { height: 8px; margin-top: 9px; }
.vbar.tall span { height: 104px; }
.vbar.short span { height: 7px; }

.side { display: flex; flex-direction: column; width: 165px; flex: none; padding: 0 1px 0 2px; background: #f0f0f0; border-left: 1px solid #fff; }
.side .phead { padding-left: 6px; }
.visibility { padding-top: 1px; }
.global { display: grid; grid-template-columns: 45px 33px 33px 33px; gap: 4px; height: 10px; margin: 9px 0 3px 3px; }
.global span { font-size: 7px; line-height: 10px; white-space: nowrap; }
.global button { line-height: 8px; }
.viewsel { display: flex; align-items: center; margin: 0 0 9px 3px; }
.viewsel label { width: 49px; }
.combo { display: flex; align-items: center; flex: 1; height: 9px; padding-left: 2px; border: 1px solid #b5b5b5; background: #e3e3e3; }
.combo select { flex: 1; line-height: 7px; height: 7px; }
.caret { width: 5px; height: 8px; margin-right: 2px; }
.layers { display: flex; height: 124px; padding-left: 3px; }
.tablewrap { flex: 1; overflow: hidden; }
.layers table { width: 100%; table-layout: fixed; }
.layers tr { height: 9px; }
.layers th { text-decoration: underline; white-space: nowrap; line-height: 7px; }
.layers td { line-height: 9px; white-space: nowrap; }
.layers th:not(:first-child) { text-align: center; }
.layers td label { display: flex; align-items: center; gap: 1px; }
.layers td > input, .layers td > .sw { margin: 0 auto; }
.layers .rule { height: 4px; }
.layers .rule td { line-height: 0; height: 4px; background: linear-gradient(#999, #999) center / 100% 1px no-repeat; }
.layers .sub { height: 7px; }
.alt { background: #e0e0e0; }
.c10 { width: 10px; } .c11 { width: 11px; } .c12 { width: 12px; } .c13 { width: 13px; }
.sw { display: block; flex: none; width: 8px; height: 8px; background: #000; border: 1px solid #aaa; }
.sw.lime { background: #1cff1c; } .sw.olive { background: #64913a; } .sw.red { background: #f00; } .sw.blue { background: #0a72e0; } .sw.yellow { background: #ff0; }
.enable { display: flex; align-items: center; justify-content: center; gap: 2px; height: 9px; }
.options { display: flex; flex-direction: column; flex: 1; min-height: 0; padding-top: 6px; }
.optbox { flex: 1; padding: 16px 3px; border: 1px solid #999; font: 5px/7px "Liberation Sans", sans-serif; }
.optrow { display: flex; align-items: center; gap: 3px; margin-top: 7px; padding-left: 3px; }
.optrow .combo { flex: none; width: 68px; height: 9px; background: #fff; }
.optrow .combo.grey { margin-left: 11px; background: #e3e3e3; }
.optrow .combo > i:last-child { width: 7px; font-family: "DejaVu Sans", sans-serif; }
.chiplet { width: 4px; height: 5px; margin-right: 2px; background: #1c5fb0; border: 1px solid #123; }

.status { display: grid; grid-template-columns: 76fr 73fr 76fr 75fr 75fr 115fr 76fr 75fr 76fr 72fr 76fr; height: 12px; line-height: 12px; background: #f0f0f0; }
.status > span { min-width: 0; padding-left: 2px; overflow: hidden; white-space: nowrap; border-left: 1px solid #e2e2e2; }
.status > span:first-child { border: 0; }
.status > .busy { margin: 1px 0; line-height: 10px; padding-left: 0; background: #f00; border: 0; }
.status .dim { color: #777; }
.status .keys { display: flex; align-items: center; gap: 3px; }
.keys button { width: 10px; height: 10px; line-height: 8px; }

.dialog { position: absolute; display: flex; flex-direction: column; background: #f0f0f0; border: 1px solid #aaa; box-shadow: 1px 2px 5px rgba(0, 0, 0, .5); font: 5px/7px "Liberation Sans", sans-serif; }
.dialog button { width: 27px; height: 10px; line-height: 8px; }
.dialog button.primary { border: 1px solid #0078d7; box-shadow: inset 0 0 0 1px #9fcdf2; }
.dialog button.assign { border-color: #0078d7; background: #dcebf8; height: 8px; line-height: 6px; }
.dtitle { display: flex; align-items: center; gap: 3px; height: 13px; padding: 0 2px 0 3px; background: #fff; color: #888; font: 6px/13px Roboto, sans-serif; }
.dtitle.dark { color: #222; }
.dtitle span { flex: 1; min-width: 0; white-space: nowrap; }
.dtitle i { width: 20px; text-align: center; font-family: "DejaVu Sans", sans-serif; }
.dtitle.dark i { width: 9px; }
.appicon { width: 8px; height: 8px; flex: none; }
.dfoot { height: 9px; border-top: 1px solid #d0d0d0; }
.edit { left: 7px; top: 103px; width: 286px; height: 188px; }
.panes { display: flex; flex: 1; min-height: 0; border-top: 1px solid #888; }
.pane { display: flex; flex-direction: column; border-right: 1px solid #888; }
.avail { width: 121px; padding: 7px 5px 0 3px; }
.values { flex: 1; border-left: 1px solid #888; }
.group { display: flex; flex-direction: column; height: 132px; padding: 7px 7px 0 5px; }
.group legend { margin-left: 3px; }
.listframe { height: 103px; border: 1px solid #777; background: #fff; }
.listtop { display: flex; height: 94px; overflow: hidden; }
.listtop select { display: block; flex: 1; height: 94px; padding-top: 1px; overflow: hidden; scrollbar-width: none; }
.listtop option { padding: 0 1px; min-height: 6px; height: 6px; line-height: 6px; font-size: 5px; }
.hbar { display: flex; height: 7px; margin-right: 7px; background: #f4f4f4; font: 7px/6px "DejaVu Sans", sans-serif; }
.hbar i { width: 8px; text-align: center; }
.hbar span { width: 54px; background: #cdcdcd; }
.hbar i:last-child { margin-left: auto; }
.name { display: flex; align-items: center; height: 11px; }
.name label { width: 19px; margin-left: -3px; }
.name input { flex: 1; height: 9px; border: 1px solid #777; background: #fff; }
.buttons { display: flex; gap: 5px; }
.avail .buttons { margin-top: auto; gap: 6px; }
.values .buttons { padding: 7px 4px 2px 3px; border-top: 1px solid #999; }
.props { width: 100%; margin-bottom: auto; table-layout: fixed; }
.props th { height: 18px; padding-top: 3px; font-weight: bold; border-bottom: 1px solid #999; }
.props th:first-child { width: 19px; padding-left: 3px; }
.props th:nth-child(2) { padding-left: 15px; }
.props th:last-child { width: 57px; padding-left: 3px; }
.props td { height: 12px; }
.props td:first-child { padding-left: 6px; }
.props button { display: block; }

.prop { left: 523px; top: 83px; width: 105px; height: 211px; }
.pbody { display: flex; flex-direction: column; flex: 1; min-height: 0; padding: 6px 3px 0 2px; }
.phdr { display: grid; grid-template-columns: 45px 44px; height: 11px; line-height: 10px; text-align: center; }
.phdr span { background: #e9e9e9; border: solid #999; border-width: 0 1px 1px 0; }
.pframe { display: flex; height: 139px; border: 1px solid #999; background: #fff; }
.pscroll { flex: 1; }
.pscroll table { width: 100%; height: 62px; table-layout: fixed; }
.pscroll td, .pscroll th { border: solid #777; border-width: 0 1px 1px 0; line-height: 6px; }
.pscroll th { width: 45px; background: #f0f0f0; padding-left: 1px; }
.pscroll td select { display: block; height: 6px; line-height: 6px; padding-left: 1px; }
.pscroll .picked { background: #0078d7; color: #fff; }
.pscroll .ar { width: 7px; }
.ar svg { display: block; width: 5px; height: 6px; margin: 0 auto; }
.prop .buttons { margin: auto 0 3px 4px; gap: 4px; }
.prop .buttons button { width: 25px; }

.notes { position: absolute; inset: 0; width: 100%; height: 100%; pointer-events: none; }
.stamp { position: absolute; left: 379px; top: 223px; color: #d80c0c; font: 17px/20px "Comic Neue", Lato, sans-serif; }
.watermark { position: absolute; right: 14px; bottom: 8px; color: #8c8c8c; font: 17px/20px "Liberation Sans", "Noto Sans CJK SC", sans-serif; text-shadow: 1px 1px 0 #fff; white-space: nowrap; }
```
